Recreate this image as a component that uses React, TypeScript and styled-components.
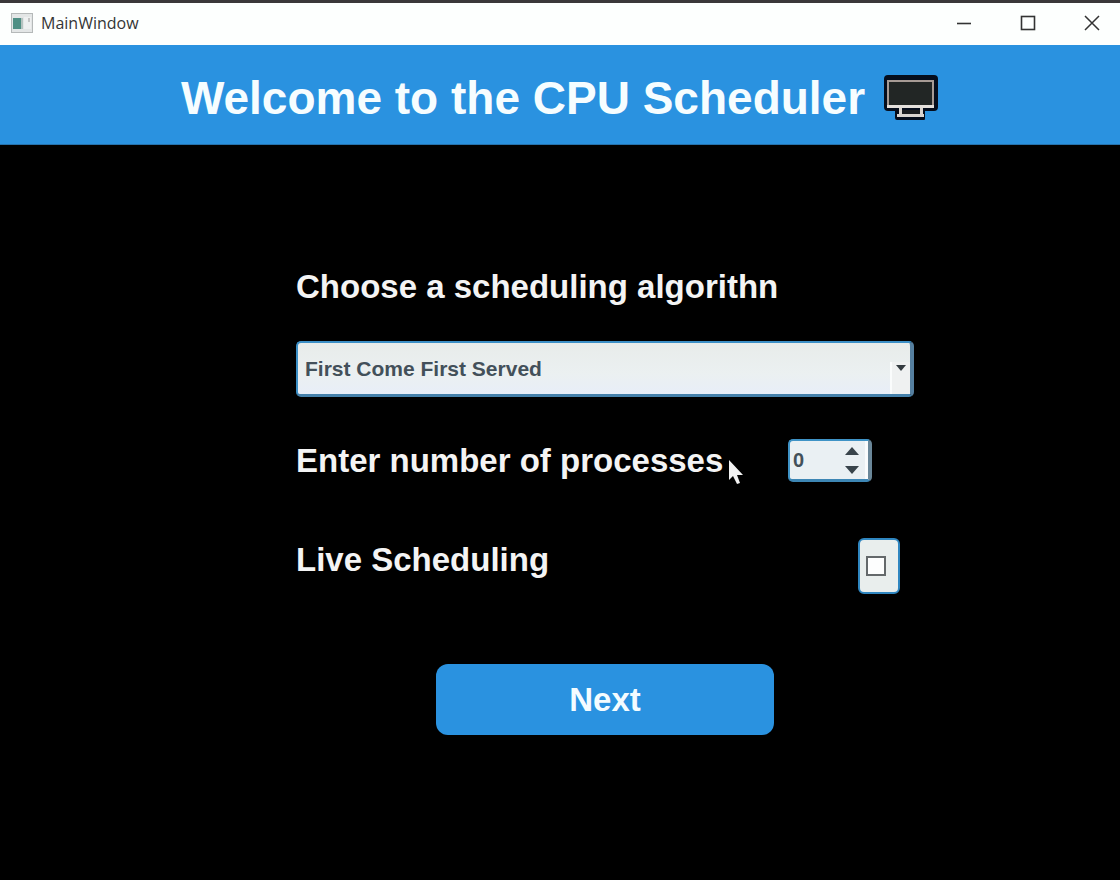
import React, { useState } from "react";
import styled, { createGlobalStyle } from "styled-components";

const GlobalStyle = createGlobalStyle`
  *, *::before, *::after { box-sizing: border-box; }
  html, body, #root { height: 100%; }
  body {
    margin: 0;
    background: #000;
    font-family: "Liberation Sans", Arial, sans-serif;
  }
`;

const Window = styled.div`
  min-height: 100%;
  display: flex;
  flex-direction: column;
  background: #000;
  border-top: 3px solid #3b383a;
`;

const TitleBar = styled.div`
  display: flex;
  align-items: center;
  height: 42px;
  padding: 0 12px 2px 11px;
  background: #fdfffe;
`;

const WindowTitle = styled.span`
  flex: 1;
  margin-left: 8px;
  font: 16px/24px "Open Sans", "Noto Sans", sans-serif;
  color: #353535;
`;

const WindowControls = styled.div`
  display: flex;
  gap: 32px;
`;

const WindowButton = styled.button`
  display: grid;
  place-items: center;
  width: 32px;
  height: 40px;
  padding: 0;
  border: 0;
  background: transparent;
`;

const Banner = styled.header`
  display: flex;
  align-items: center;
  justify-content: center;
  gap: 18px;
  height: 100px;
  padding-top: 6px;
  background: #2a92e0;
  border-bottom: 1px solid #2672ac;
`;

const Heading = styled.h1`
  margin: 0;
  font-size: 46px;
  line-height: 56px;
  font-weight: bold;
  color: #f6fdff;
`;

const Main = styled.main`
  flex: 1;
  display: flex;
  justify-content: center;
  padding: 120px 0 40px 90px;
`;

const Form = styled.form`
  display: flex;
  flex-direction: column;
  width: 618px;
`;

const Label = styled.label`
  font-size: 33px;
  line-height: 44px;
  font-weight: bold;
  color: #f4f4f4;
  white-space: nowrap;
`;

const Row = styled.div<{ $top: number; $end: number }>`
  position: relative;
  display: flex;
  align-items: flex-start;
  justify-content: space-between;
  margin-top: ${(p) => p.$top}px;
  padding-right: ${(p) => p.$end}px;
`;

const SelectBox = styled.div`
  position: relative;
  margin-top: 32px;
`;

const Select = styled.select`
  appearance: none;
  display: block;
  width: 100%;
  height: 56px;
  padding: 0 32px 0 7px;
  border: 2px solid #3c8fc6;
  border-right: 4px solid #557f9f;
  border-bottom: 3px solid #4581ab;
  border-radius: 5px;
  background: linear-gradient(#e8ecea, #ebf0f1 60%, #e8eef8);
  font: bold 21px "Liberation Sans", Arial, sans-serif;
  color: #43505a;
`;

const SelectArrow = styled.span`
  position: absolute;
  right: 4px;
  bottom: 3px;
  display: grid;
  justify-items: center;
  width: 20px;
  height: 32px;
  padding-top: 3px;
  border-left: 2px solid #fafcfc;
  background: #eff1f1;
  pointer-events: none;
`;

const Spin = styled.div`
  display: flex;
  width: 84px;
  height: 43px;
  border: 2px solid #3f93c6;
  border-right: 4px solid #6a8799;
  border-bottom: 3px solid #3d86b4;
  border-radius: 5px;
  background: #eaf0f3;
`;

const SpinInput = styled.input`
  appearance: textfield;
  flex: 1;
  min-width: 0;
  padding: 0 0 0 3px;
  border: 0;
  background: transparent;
  font: bold 20px "Liberation Sans", Arial, sans-serif;
  color: #43505a;

  &::-webkit-inner-spin-button {
    appearance: none;
    margin: 0;
  }
`;

const SpinButtons = styled.div`
  display: flex;
  flex-direction: column;
  width: 32px;
  padding-left: 2px;
  border-right: 3px solid #fafcfd;
`;

const SpinButton = styled.button`
  flex: 1;
  display: grid;
  place-items: center;
  padding: 0;
  border: 0;
  background: transparent;
`;

const CheckFrame = styled.span`
  display: flex;
  align-items: center;
  width: 42px;
  height: 56px;
  padding-left: 6px;
  border: 2px solid #2f86c0;
  border-radius: 6px;
  background: #e9eeed;
`;

const Checkbox = styled.input`
  appearance: none;
  width: 20px;
  height: 20px;
  margin: 0;
  border: 2px solid #64696b;
  background: #fdfefe;

  &:checked {
    background: #2a92e0;
  }
`;

const NextButton = styled.button`
  align-self: center;
  width: 338px;
  height: 71px;
  margin-top: 70px;
  border: 0;
  border-radius: 12px;
  background: #2a92e0;
  font: bold 33px "Liberation Sans", Arial, sans-serif;
  color: #f4fcff;
`;

const Pointer = styled.svg`
  position: absolute;
  left: 432px;
  top: 20px;
  pointer-events: none;
`;

const AppIcon = () => (
  <svg width="22" height="20" viewBox="0 0 22 20" aria-hidden="true">
    <rect x="0.5" y="0.5" width="21" height="19" fill="#e3e6e6" stroke="#b5b9b9" />
    <rect x="2" y="5" width="8" height="11" fill="#4f8f84" />
    <rect x="10" y="5" width="2" height="11" fill="#b5c3c0" />
    <rect x="13" y="4" width="7" height="12" fill="#eef0f0" />
    <path d="M18 5v4" stroke="#999" />
  </svg>
);

const MonitorIcon = () => (
  <svg width="56" height="48" viewBox="0 0 56 48" role="img" aria-label="Desktop computer">
    <path
      d="M5 1h46q4 0 4 4v28q0 4-4 4h-9v8q0 1-1 1H14q-2 0-2-2v-7H5q-4 0-4-4V5q0-4 4-4z"
      fill="#050d1c"
    />
    <rect x="4" y="6" width="47" height="27" fill="#a79b95" />
    <rect x="6" y="8" width="43" height="23" fill="#222625" />
    <rect x="4" y="31" width="47" height="3" fill="#e4e0dc" />
    <path d="M16 34h3v6h18v-6h3v6h1v3H14v-3h2z" fill="#d9d4d0" />
    <rect x="19" y="36" width="18" height="4" fill="#1b1d20" />
  </svg>
);

export default function App() {
  const [count, setCount] = useState(0);
  return (
    <Window>
      <GlobalStyle />
      <TitleBar>
        <AppIcon />
        <WindowTitle>MainWindow</WindowTitle>
        <WindowControls>
          <WindowButton aria-label="Minimize">
            <svg width="16" height="16" viewBox="0 0 16 16">
              <path d="M1 8.5h14" stroke="#333" strokeWidth="1.6" />
            </svg>
          </WindowButton>
          <WindowButton aria-label="Maximize">
            <svg width="16" height="16" viewBox="0 0 16 16">
              <rect x="1.5" y="1.5" width="13" height="13" fill="none" stroke="#333" strokeWidth="1.6" />
            </svg>
          </WindowButton>
          <WindowButton aria-label="Close">
            <svg width="16" height="16" viewBox="0 0 16 16">
              <path d="M1 1l14 14M15 1L1 15" stroke="#333" strokeWidth="1.5" />
            </svg>
          </WindowButton>
        </WindowControls>
      </TitleBar>
      <Banner>
        <Heading>Welcome to the CPU Scheduler</Heading>
        <MonitorIcon />
      </Banner>
      <Main>
        <Form onSubmit={(e) => e.preventDefault()}>
          <Label htmlFor="algorithm">Choose a scheduling algorithn</Label>
          <SelectBox>
            <Select id="algorithm">
              <option>First Come First Served</option>
            </Select>
            <SelectArrow>
              <svg width="10" height="6" viewBox="0 0 10 6">
                <path d="M0 0h10L5 6z" fill="#333b40" />
              </svg>
            </SelectArrow>
          </SelectBox>
          <Row $top={42} $end={42}>
            <Label htmlFor="processes">Enter number of processes</Label>
            <Spin>
              <SpinInput
                id="processes"
                type="number"
                min={0}
                value={count}
                onChange={(e) => setCount(Number(e.target.value))}
              />
              <SpinButtons>
                <SpinButton type="button" aria-label="Increase" onClick={() => setCount(count + 1)}>
                  <svg width="14" height="8" viewBox="0 0 14 8">
                    <path d="M0 8h14L7 0z" fill="#39444b" />
                  </svg>
                </SpinButton>
                <SpinButton
                  type="button"
                  aria-label="Decrease"
                  onClick={() => setCount(Math.max(0, count - 1))}
                >
                  <svg width="14" height="8" viewBox="0 0 14 8">
                    <path d="M0 0h14L7 8z" fill="#39444b" />
                  </svg>
                </SpinButton>
              </SpinButtons>
            </Spin>
            <Pointer width="16" height="26" viewBox="0 0 16 26" aria-hidden="true">
              <path d="M1 1v20l4-4 4 8 3-1-3-8h6z" fill="#f2f2f2" />
            </Pointer>
          </Row>
          <Row $top={55} $end={14}>
            <Label htmlFor="live">Live Scheduling</Label>
            <CheckFrame>
              <Checkbox id="live" type="checkbox" />
            </CheckFrame>
          </Row>
          <NextButton type="submit">Next</NextButton>
        </Form>
      </Main>
    </Window>
  );
}
